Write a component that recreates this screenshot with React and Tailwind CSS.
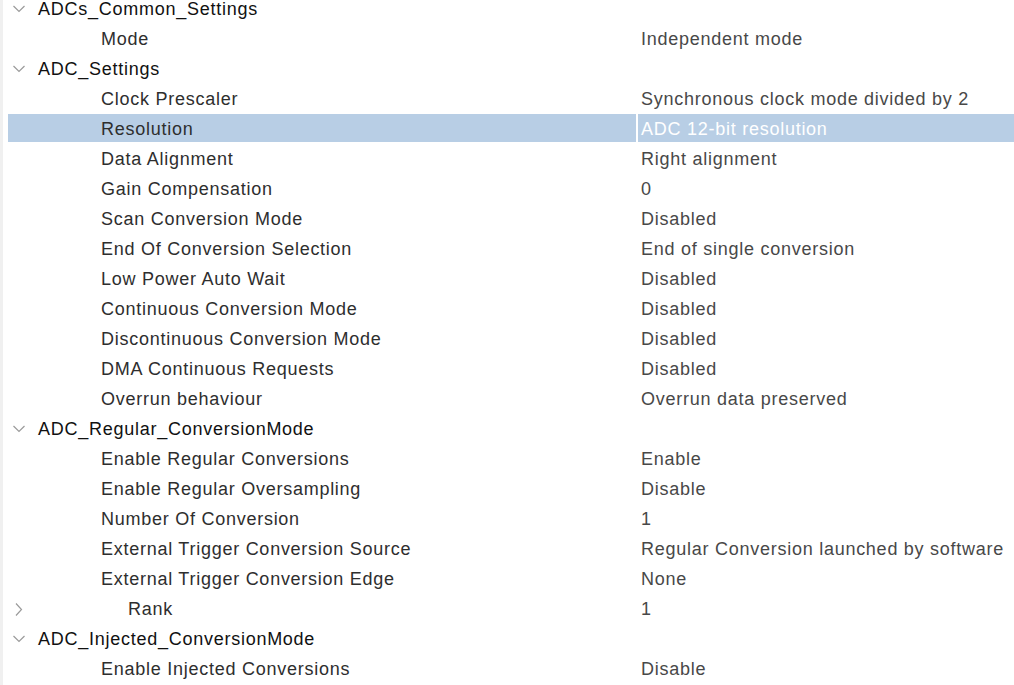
import React from 'react'

const rows = [
    { kind: 'group', label: 'ADCs_Common_Settings' },
    { label: 'Mode', value: 'Independent mode' },
    { kind: 'group', label: 'ADC_Settings' },
    { label: 'Clock Prescaler', value: 'Synchronous clock mode divided by 2' },
    { label: 'Resolution', value: 'ADC 12-bit resolution', selected: true },
    { label: 'Data Alignment', value: 'Right alignment' },
    { label: 'Gain Compensation', value: '0' },
    { label: 'Scan Conversion Mode', value: 'Disabled' },
    { label: 'End Of Conversion Selection', value: 'End of single conversion' },
    { label: 'Low Power Auto Wait', value: 'Disabled' },
    { label: 'Continuous Conversion Mode', value: 'Disabled' },
    { label: 'Discontinuous Conversion Mode', value: 'Disabled' },
    { label: 'DMA Continuous Requests', value: 'Disabled' },
    { label: 'Overrun behaviour', value: 'Overrun data preserved' },
    { kind: 'group', label: 'ADC_Regular_ConversionMode' },
    { label: 'Enable Regular Conversions', value: 'Enable' },
    { label: 'Enable Regular Oversampling', value: 'Disable' },
    { label: 'Number Of Conversion', value: '1' },
    { label: 'External Trigger Conversion Source', value: 'Regular Conversion launched by software' },
    { label: 'External Trigger Conversion Edge', value: 'None' },
    { kind: 'collapsed', label: 'Rank', value: '1' },
    { kind: 'group', label: 'ADC_Injected_ConversionMode' },
    { label: 'Enable Injected Conversions', value: 'Disable' },
]

function ChevronDown() {
    return (
        <svg width="12" height="8" viewBox="0 0 12 8" className="shrink-0">
            <path d="M0.5 1 L6 6.5 L11.5 1" fill="none" stroke="#9b9b9b" strokeWidth="1.2" />
        </svg>
    )
}

function ChevronRight() {
    return (
        <svg width="8" height="13" viewBox="0 0 8 13" className="shrink-0">
            <path d="M1 0.5 L6.5 6.5 L1 12.5" fill="none" stroke="#9b9b9b" strokeWidth="1.2" />
        </svg>
    )
}

function Row({ row }) {
    const bg = row.selected ? 'bg-[#b8cee5]' : ''
    let label
    if (row.kind === 'group') {
        label = (
            <div className="flex items-center pl-[5px]">
                <ChevronDown />
                <span className="ml-[13px] text-[#111]">{row.label}</span>
            </div>
        )
    } else if (row.kind === 'collapsed') {
        label = (
            <div className="flex items-center pl-[7px]">
                <ChevronRight />
                <span className="ml-[105px] text-[#2e2e2e]">{row.label}</span>
            </div>
        )
    } else {
        label = <span className="pl-[93px] text-[#2e2e2e]">{row.label}</span>
    }

    return (
        <div className="flex h-[28px] mb-[2px]">
            <div className={`w-[628px] shrink-0 flex items-center pt-[2px] ${bg}`}>{label}</div>
            {row.kind === 'group' ? null : (
                <div className={`ml-[2px] flex-1 flex items-center pt-[2px] pl-[3px] ${bg} ${row.selected ? 'text-white' : 'text-[#484848]'}`}>
                    {row.value}
                </div>
            )}
        </div>
    )
}

export default function App() {
    return (
        <div className="w-[1014px] h-[685px] overflow-hidden bg-white flex font-['Liberation_Sans',Arial,sans-serif] text-[18px] tracking-[0.74px] whitespace-nowrap">
            <div className="w-[3px] shrink-0 bg-[#f0f0f0]" />
            <div className="flex-1 ml-[5px] -mt-[6px]">
                {rows.map((r, i) => (
                    <Row key={i} row={r} />
                ))}
            </div>
        </div>
    )
}
